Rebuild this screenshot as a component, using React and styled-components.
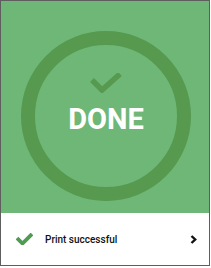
import React from "react";
import styled, { createGlobalStyle } from "styled-components";

const Global = createGlobalStyle`
  html, body { margin: 0; padding: 0; background: #ffffff; }
  body { font-family: Roboto, "Noto Sans", sans-serif; }
`;

const Card = styled.div`
  box-sizing: border-box;
  width: 210px;
  height: 266px;
  border: 1px solid #5e5e5e;
  display: flex;
  flex-direction: column;
  background: #ffffff;
`;

const Hero = styled.div`
  height: 212px;
  background: #6eb776;
  display: flex;
  justify-content: center;
  align-items: flex-start;
  padding-top: 30px;
  box-sizing: border-box;
`;

const Ring = styled.div`
  box-sizing: border-box;
  width: 170px;
  height: 170px;
  border: 14px solid #56994f;
  border-radius: 50%;
  display: flex;
  flex-direction: column;
  align-items: center;
  padding-top: 28px;
  margin-left: 2px;
`;

const Title = styled.div`
  margin-top: 12px;
  font-family: Roboto, sans-serif;
  font-weight: 700;
  font-size: 29px;
  line-height: 29px;
  color: #ffffff;
`;

const Footer = styled.div`
  flex: 1;
  display: flex;
  align-items: center;
  padding: 0 12px 0 15px;
`;

const Label = styled.span`
  flex: 1;
  margin-left: 12px;
  font-family: Roboto, sans-serif;
  font-weight: 500;
  font-size: 10px;
  color: #111111;
`;

const Check = ({ w, h, color, sw, pts }) => (
  <svg width={w} height={h} viewBox={`0 0 ${w} ${h}`} style={{ display: "block" }}>
    <polyline points={pts} fill="none" stroke={color} strokeWidth={sw} strokeLinecap="butt" strokeLinejoin="miter" />
  </svg>
);

export default function App() {
  return (
    <>
      <Global />
      <Card>
        <Hero>
          <Ring>
            <Check w={32} h={20} color="#56994f" sw={5.5} pts="2,7 12,17 30,1" />
            <Title>DONE</Title>
          </Ring>
        </Hero>
        <Footer>
          <Check w={17} h={12} color="#4f9b52" sw={3.8} pts="1,5 6.5,10.5 16,1" />
          <Label>Print successful</Label>
          <svg width="7" height="9" viewBox="0 0 7 9" style={{ display: "block" }}>
            <polyline points="1.5,1 5.2,4.5 1.5,8" fill="none" stroke="#111" strokeWidth="2.4" />
          </svg>
        </Footer>
      </Card>
    </>
  );
}
